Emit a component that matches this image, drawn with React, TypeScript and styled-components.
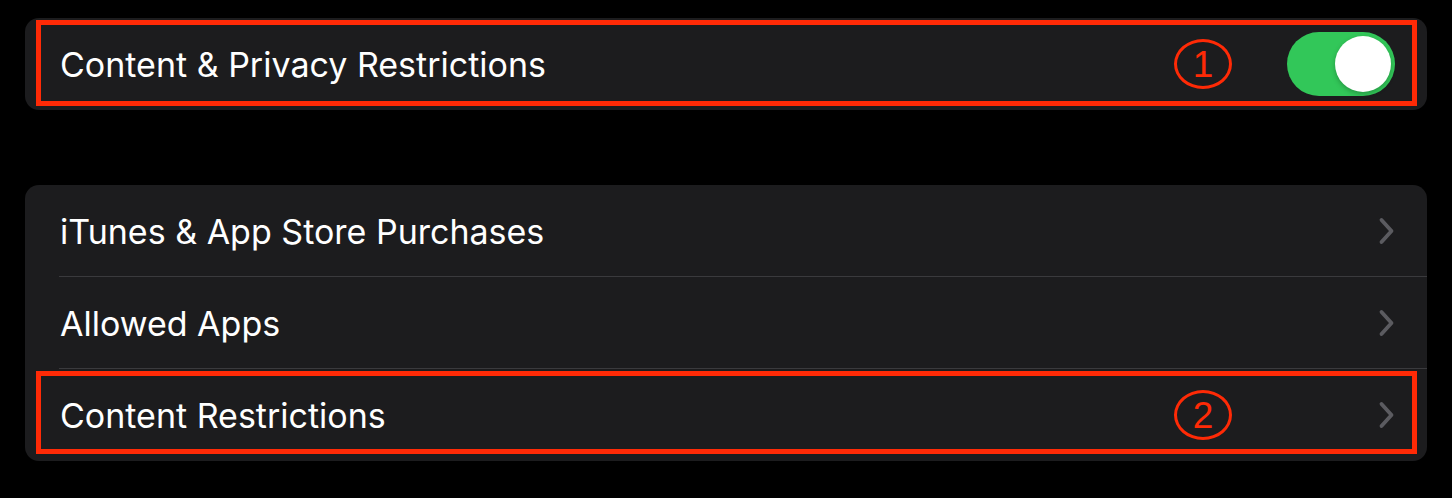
import React from "react";
import styled, { createGlobalStyle } from "styled-components";

const GlobalStyle = createGlobalStyle`
    html, body {
        margin: 0;
        padding: 0;
        background: #000;
    }
    body {
        font-family: Inter, "Liberation Sans", sans-serif;
        -webkit-font-smoothing: antialiased;
    }
`;

const Page = styled.div`
    width: 1452px;
    height: 498px;
    box-sizing: border-box;
    padding: 18px 25px 0 25px;
    background: #000;
    display: flex;
    flex-direction: column;
    gap: 75px;
`;

const Card = styled.div`
    background: #1c1c1e;
    border-radius: 14px;
    overflow: hidden;
`;

const Row = styled.div<{ $divider?: boolean }>`
    position: relative;
    height: 92px;
    box-sizing: border-box;
    padding: 0 32px 0 35px;
    display: flex;
    align-items: center;
    justify-content: space-between;

    &::after {
        content: "";
        display: ${(p) => (p.$divider ? "block" : "none")};
        position: absolute;
        left: 34px;
        right: 0;
        bottom: 0;
        height: 1px;
        background: #3a3a3d;
    }
`;

const Label = styled.span`
    color: #fff;
    font-size: 34px;
    font-weight: 400;
    letter-spacing: 0;
`;

// red annotation frame drawn over the row
const Highlight = styled.div<{ $bottom: number }>`
    position: absolute;
    left: 11px;
    right: 10px;
    top: 2px;
    bottom: ${(p) => p.$bottom}px;
    border: 5px solid #ff2a06;
    pointer-events: none;
`;

const Badge = styled.div`
    position: absolute;
    right: 195px;
    top: 50%;
    transform: translateY(-50%);
    width: 52px;
    height: 44px;
    border: 3px solid #ff2a06;
    border-radius: 50%;
    display: flex;
    align-items: center;
    justify-content: center;
    color: #ff2a06;
    font-family: "Liberation Sans", Arial, sans-serif;
    font-size: 37px;
    line-height: 1;
`;

const Switch = styled.div`
    width: 108px;
    height: 64px;
    border-radius: 32px;
    background: #32c759;
    box-sizing: border-box;
    padding: 4px;
    display: flex;
    justify-content: flex-end;
    align-items: center;
`;

const Knob = styled.div`
    width: 56px;
    height: 56px;
    border-radius: 50%;
    background: #fff;
    box-shadow: 0 2px 5px rgba(0, 0, 0, 0.25);
`;

const Chevron = () => (
    <svg width="17" height="28" viewBox="0 0 17 28" fill="none">
        <path
            d="M3.5 3 L13.5 14 L3.5 25"
            stroke="#5b5b60"
            strokeWidth="3.8"
            strokeLinecap="round"
            strokeLinejoin="round"
        />
    </svg>
);

const items = [
    { label: "iTunes & App Store Purchases" },
    { label: "Allowed Apps" },
    { label: "Content Restrictions", mark: "2" },
];

export default function App() {
    return (
        <>
            <GlobalStyle />
            <Page>
                <Card>
                    <Row>
                        <Label>Content &amp; Privacy Restrictions</Label>
                        <Switch>
                            <Knob />
                        </Switch>
                        <Highlight $bottom={4} />
                        <Badge>1</Badge>
                    </Row>
                </Card>
                <Card>
                    {items.map((item, i) => (
                        <Row key={item.label} $divider={i < items.length - 1}>
                            <Label>{item.label}</Label>
                            <Chevron />
                            {item.mark && (
                                <>
                                    <Highlight $bottom={7} />
                                    <Badge>{item.mark}</Badge>
                                </>
                            )}
                        </Row>
                    ))}
                </Card>
            </Page>
        </>
    );
}
